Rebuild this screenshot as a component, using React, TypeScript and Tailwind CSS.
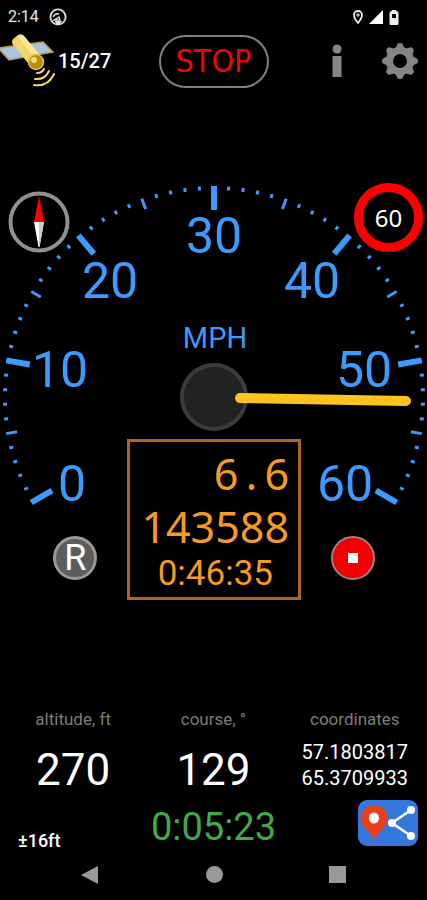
import { Fragment } from "react";

const dialLabels = [
  { text: "0", x: 72, y: 321 },
  { text: "10", x: 60, y: 207 },
  { text: "20", x: 110, y: 118 },
  { text: "30", x: 214, y: 73 },
  { text: "40", x: 312, y: 118 },
  { text: "50", x: 364, y: 207 },
  { text: "60", x: 345, y: 321 },
];

const ticks = Array.from({ length: 61 }, (_, i) => i);

const teeth = [0, 45, 90, 135, 180, 225, 270, 315];

const coordinates = ["57.1803817", "65.3709933"];

const StatusBar = () => {
  return (
    <div className="flex h-[34px] items-center justify-between pl-2 pr-7">
      <div className="flex items-center gap-[10px]">
        <span className="text-base text-gray-200">2:14</span>
        <svg width="18" height="18" viewBox="0 0 18 18" fill="none" stroke="#ddd">
          <circle cx="9" cy="9" r="7.6" strokeWidth="1.8" />
          <path d="M4 9q2-4 6-3M5 12l5-3 1 3z" strokeWidth="1.4" />
          <path d="M6 13h7l-2 3H7z" fill="#ddd" stroke="none" />
        </svg>
      </div>
      <div className="flex items-center gap-[6px]">
        <svg width="10" height="15" viewBox="0 0 10 15" fill="none">
          <path d="M5 1a4 4 0 0 0-4 4c0 3 4 8 4 8s4-5 4-8a4 4 0 0 0-4-4z" stroke="#eee" strokeWidth="1.8" />
          <path d="M5 3v4M3 5h4" stroke="#eee" />
        </svg>
        <svg width="14" height="14" viewBox="0 0 14 14">
          <path d="M14 0v14H0z" fill="#fff" />
        </svg>
        <svg width="10" height="15" viewBox="0 0 10 15">
          <path d="M3 0h4v1h1l1.500 1.500V14q0 1-1 1h-7q-1 0-1-1V2.500L2 1h1z" fill="#eee" />
          <path d="M3 4h4v4H3z" fill="#000" />
        </svg>
      </div>
    </div>
  );
};

const Satellite = () => {
  return (
    <svg width="55" height="54" viewBox="0 0 55 54">
      <path d="M-2 14L43 8 53 18 9 26z" fill="#a9c4df" stroke="#b89b50" strokeWidth="1.500" />
      <path d="M13 5L18 1q3-2 6 1L39 20 28 29 13 11q-2-3 0-6z" fill="#f3d56b" />
      <path d="M19 1q3-1 5 1L39 20 34 23 18 3z" fill="#fbe799" />
      <circle cx="36" cy="28" r="7.500" fill="#b88c0c" stroke="#e8bf3e" strokeWidth="1.500" />
      <circle cx="34" cy="26" r="3" fill="#f5dc78" />
      <g fill="none" stroke="#f0d477" strokeWidth="2" strokeLinecap="round">
        <path d="M37 39q5 0 7-4" />
        <path d="M35 45q10 1 14-8" />
        <path d="M34 51q14 2 20-11" />
      </g>
    </svg>
  );
};

const Toolbar = () => {
  return (
    <header className="grid h-[54px] grid-cols-[1fr_110px_1fr] items-center">
      <div className="flex items-center gap-[3px]">
        <Satellite />
        <span className="text-xl font-medium">15/27</span>
      </div>
      <button className="h-[53px] rounded-full border-2 border-[#808080] font-['DejaVu_Sans_Condensed','DejaVu_Sans',sans-serif] text-[32px] leading-none text-[#f00505]">
        STOP
      </button>
      <div className="flex items-center justify-end gap-[36px] pr-[9px]">
        <button aria-label="Info">
          <svg width="18" height="34" viewBox="0 0 18 34" fill="#868686">
            <circle cx="9" cy="5" r="4.500" />
            <path d="M4.500 12h9v21h-9z" />
          </svg>
        </button>
        <button aria-label="Settings">
          <svg width="36" height="36" viewBox="-18 -18 36 36">
            <circle r="10.500" fill="none" stroke="#868686" strokeWidth="7" />
            {teeth.map((a) => (
              <path key={a} d="M-5-12L-2.500-17q2.500-2 5 0L5-12z" fill="#868686" transform={`rotate(${a})`} />
            ))}
          </svg>
        </button>
      </div>
    </header>
  );
};

const Dial = () => {
  return (
    <svg viewBox="0 0 427 340" className="block w-full" role="img" aria-label="Speed dial">
      <g transform="translate(214 217)" stroke="#3c9bff">
        {ticks.map((i) => {
          const major = i % 10 === 0;
          const middle = i % 5 === 0;
          return (
            <line
              key={i}
              y1={-211}
              y2={major ? -187 : middle ? -200 : -207}
              strokeWidth={major ? 6 : 3}
              transform={`rotate(${i * 4 - 120})`}
            />
          );
        })}
      </g>
      <g fill="#3c9bff" textAnchor="middle">
        {dialLabels.map((label) => (
          <text key={label.text} x={label.x} y={label.y} fontSize="50">
            {label.text}
          </text>
        ))}
        <text x="215" y="168" fontSize="29">
          MPH
        </text>
      </g>
      <circle cx="214" cy="217" r="32" fill="#222" stroke="#3c3c3c" strokeWidth="4" />
      <path d="M240 218L406 221" stroke="#ffc21f" strokeWidth="10" strokeLinecap="round" />
    </svg>
  );
};

const Odometer = () => {
  return (
    <div className="w-[174px] border-[3px] border-[#a9681c] pb-[2px] pr-[9px] pt-[5px] text-right text-[#f59a23]">
      <div className="font-['Noto_Sans',sans-serif] text-[43px] leading-[53px]">
        6<span className="inline-block w-[26px] text-center">.</span>6
      </div>
      <div className="font-['Noto_Sans',sans-serif] text-[43px] leading-[53px]">143588</div>
      <div className="pr-[16px] text-[35px] leading-[42px]">0:46:35</div>
    </div>
  );
};

const Gauge = () => {
  return (
    <section className="relative mt-[92px]">
      <Dial />
      <div className="absolute inset-x-1 top-[3px] flex items-start justify-between">
        <svg className="mt-2" width="70" height="62" viewBox="0 0 70 62" role="img" aria-label="Compass">
          <circle cx="35" cy="31" r="28.500" fill="#000" stroke="#909090" strokeWidth="4" />
          <path d="M35 5L40 31H30z" fill="#f00" />
          <path d="M30 31h10l-4.500 25h-1z" fill="#fff" />
          <path d="M35 31h5l-4.500 25H35z" fill="#ccc" />
        </svg>
        <div className="flex size-[69px] items-center justify-center rounded-full border-[9px] border-[#f00] bg-black font-['Noto_Sans',sans-serif] text-2xl">
          60
        </div>
      </div>
      <div className="relative -mt-[19%] flex items-end justify-between px-[12%]">
        <button className="mb-5 ml-0.5 size-[44px] rounded-full border-[3px] border-[#999] bg-[#5c5c5c] text-4xl leading-none">
          R
        </button>
        <Odometer />
        <button
          aria-label="Stop recording"
          className="mb-5 mr-px flex size-[44px] items-center justify-center rounded-full border-2 border-[#a08080] bg-[#ee0202]"
        >
          <span className="size-[10px] bg-white" />
        </button>
      </div>
    </section>
  );
};

const Readings = () => {
  return (
    <section className="mt-[107px]">
      <div className="grid grid-cols-3 text-center">
        <div className="pl-1">
          <h2 className="text-[17px] leading-6 text-[#7c7c7c]">altitude, ft</h2>
          <p className="mt-[12px] text-[44px] leading-[54px]">270</p>
        </div>
        <div>
          <h2 className="text-[17px] leading-6 text-[#7c7c7c]">course, °</h2>
          <p className="mt-[12px] text-[44px] leading-[54px]">129</p>
        </div>
        <div className="pr-0.5">
          <h2 className="text-[17px] leading-6 text-[#7c7c7c]">coordinates</h2>
          <p className="mt-[8px] text-xl leading-[26px]">
            {coordinates.map((value) => (
              <Fragment key={value}>
                {value}
                <br />
              </Fragment>
            ))}
          </p>
        </div>
      </div>
      <div className="mt-0.5 grid h-[51px] grid-cols-3 items-center px-2">
        <span className="pl-[10px] pt-7 text-lg font-medium">±16ft</span>
        <span className="text-center text-[38px] text-[#43a84b]">0:05:23</span>
        <button aria-label="Share location" className="self-start justify-self-end">
          <svg width="62" height="48" viewBox="0 0 62 48">
            <rect x="1" y="1" width="60" height="46" rx="9" fill="#3478dd" />
            <path d="M17 6a13.500 13.500 0 0 0-13.500 13.500C3.500 28 12 31 17 41c5-10 13.500-13 13.500-21.500A13.500 13.500 0 0 0 17 6z" fill="#e8401c" />
            <ellipse cx="17" cy="19" rx="5" ry="5.500" fill="#fff" />
            <path d="M54 11L35 24 54 37" fill="none" stroke="#fff" strokeWidth="2.500" />
            <g fill="#fff">
              <circle cx="54" cy="11" r="4" />
              <circle cx="35" cy="24" r="4" />
              <circle cx="54" cy="37" r="4" />
            </g>
          </svg>
        </button>
      </div>
    </section>
  );
};

const NavBar = () => {
  return (
    <nav className="flex h-[50px] items-center justify-between px-[19%]">
      <button aria-label="Back">
        <svg width="18" height="18" viewBox="0 0 18 18">
          <path d="M17 0v18L0 9z" fill="#999" />
        </svg>
      </button>
      <button aria-label="Home" className="size-[17px] rounded-full bg-[#999]" />
      <button aria-label="Recent apps" className="size-[17px] bg-[#999]" />
    </nav>
  );
};

const App = () => {
  return (
    <main className="min-h-screen bg-black font-['Roboto',sans-serif] text-white">
      <StatusBar />
      <Toolbar />
      <Gauge />
      <Readings />
      <NavBar />
    </main>
  );
};

export default App;
